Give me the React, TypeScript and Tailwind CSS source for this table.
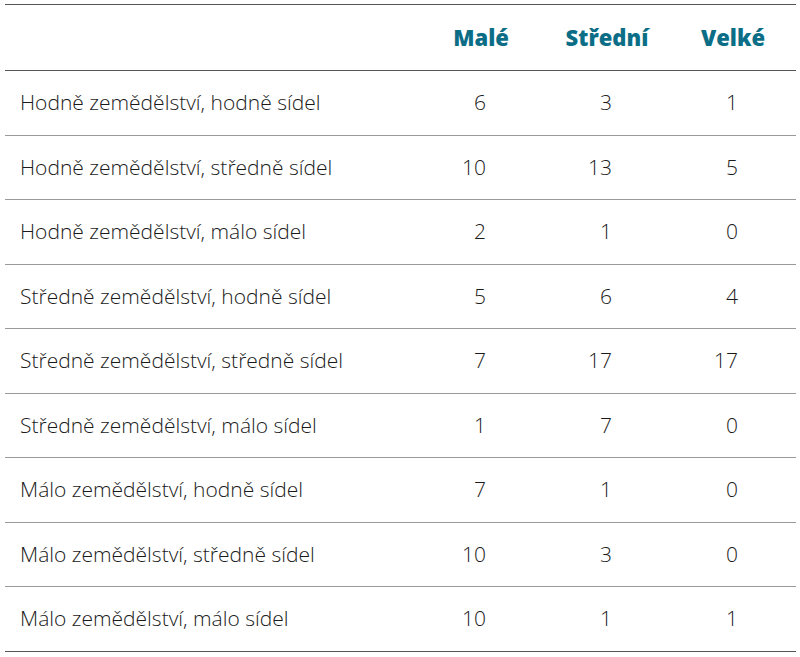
import React from 'react';

const ROWS: [string, number, number, number][] = [
  ['Hodně zemědělství, hodně sídel', 6, 3, 1],
  ['Hodně zemědělství, středně sídel', 10, 13, 5],
  ['Hodně zemědělství, málo sídel', 2, 1, 0],
  ['Středně zemědělství, hodně sídel', 5, 6, 4],
  ['Středně zemědělství, středně sídel', 7, 17, 17],
  ['Středně zemědělství, málo sídel', 1, 7, 0],
  ['Málo zemědělství, hodně sídel', 7, 1, 0],
  ['Málo zemědělství, středně sídel', 10, 3, 0],
  ['Málo zemědělství, málo sídel', 10, 1, 1],
];

export default function App() {
  return (
    <div className="w-[800px] h-[657px] bg-white pt-[4px] px-[5px]" style={{ fontFamily: '"Open Sans", sans-serif' }}>
      <table className="w-[791px] border-collapse table-fixed">
        <colgroup>
          <col className="w-[413px]" />
          <col className="w-[126px]" />
          <col className="w-[126px]" />
          <col className="w-[126px]" />
        </colgroup>
        <thead>
          <tr className="h-[66px] border-t border-b border-[#555]">
            <th />
            {['Malé', 'Střední', 'Velké'].map(h => (
              <th key={h} className="text-center text-[22px] font-extrabold text-[#0b6e86]">{h}</th>
            ))}
          </tr>
        </thead>
        <tbody>
          {ROWS.map((r, i) => (
            <tr key={r[0]} className={`h-[64.5px] border-b ${i === ROWS.length - 1 ? 'border-[#555]' : 'border-[#9a9a9a]'}`}>
              <td className="pl-[15px] text-[21px] font-light text-[#1a1a1a]">{r[0]}</td>
              {r.slice(1).map((n, j) => (
                <td key={j} className="text-right pr-[58px] text-[21px] font-light text-[#1a1a1a]">{n}</td>
              ))}
            </tr>
          ))}
        </tbody>
      </table>
    </div>
  );
}
